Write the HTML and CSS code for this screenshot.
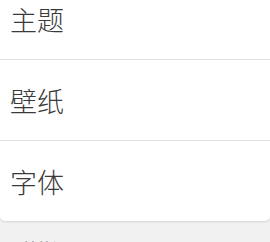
FILE: index.html
```html
<!DOCTYPE html>
<html>
  <head>
    <meta charset="utf-8" />
    <title>设置</title>
    <link rel="stylesheet" href="styles.css">
  </head>
  <body>
    <div class="card">
      <div class="row">主题</div>
      <div class="row">壁纸</div>
      <div class="row">字体</div>
    </div>
    <div class="section">其他设置</div>
  </body>
</html>
```

FILE: styles.css
```css
body {
  margin: 0;
  background-color: #f1f1f1;
  font-family: "Noto Sans CJK SC", "Noto Sans", sans-serif;
}

.card {
  background-color: #ffffff;
  margin-top: -21px;
  border-radius: 0 0 5px 5px;
  box-shadow: 0 1px 2px rgba(0, 0, 0, 0.12);
}

.row {
  height: 80px;
  display: flex;
  align-items: center;
  padding-left: 10px;
  font-size: 27px;
  font-weight: 300;
  color: #3a3a3a;
  border-bottom: 1px solid #e2e2e2;
}

.row:last-child {
  border-bottom: none;
}

.section {
  padding: 16px 0 0 22px;
  font-size: 15px;
  color: #666666;
}
```
